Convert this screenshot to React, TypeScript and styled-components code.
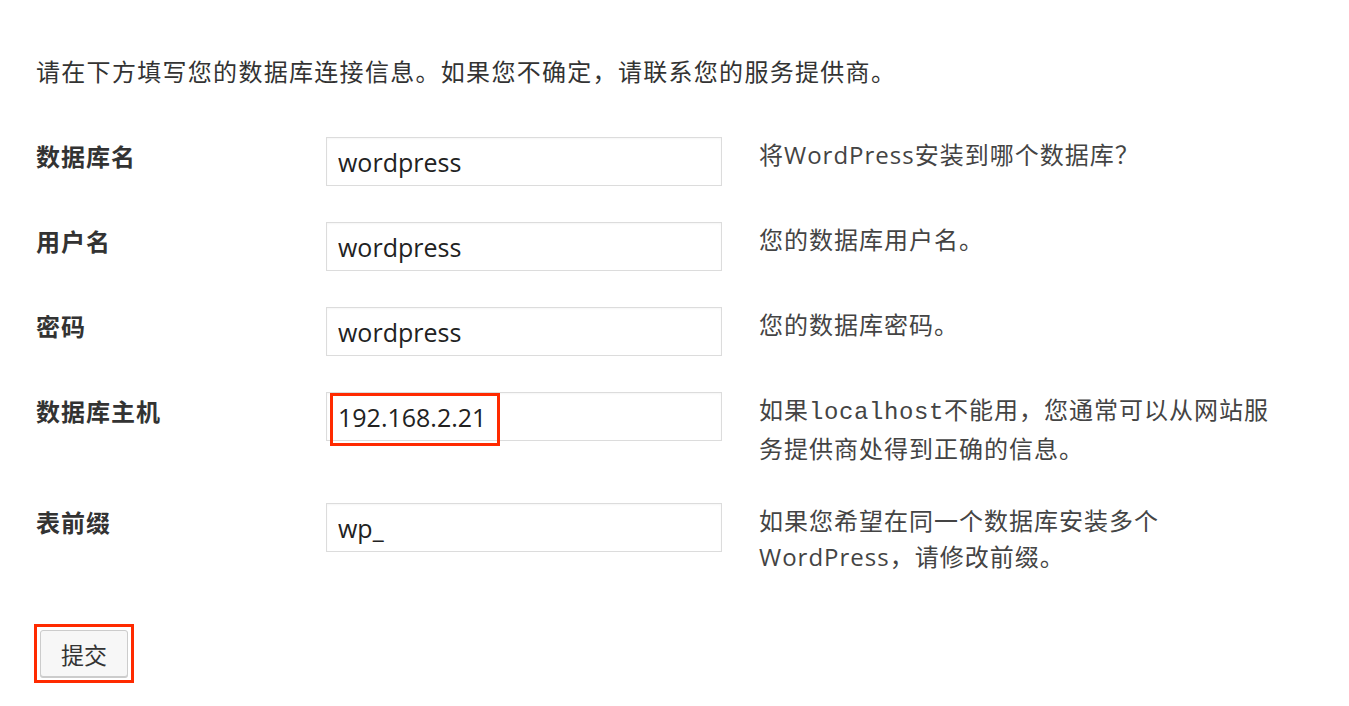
import React from 'react';

import styled, { createGlobalStyle } from 'styled-components';

const GlobalStyle = createGlobalStyle`
  html, body {
    margin: 0;
    padding: 0;
    background: #ffffff;
  }

  body {
    font-family: 'Open Sans', 'Noto Sans CJK SC', sans-serif;
    color: #333;
  }
`;

const Page = styled.div`
  width: 1349px;
  height: 706px;
  box-sizing: border-box;
  padding: 54px 0 0 36px;
  background: #fff;
  overflow: hidden;
`;

const Intro = styled.p`
  margin: 0 0 47px;
  font-size: 24px;
  letter-spacing: 1.3px;
  line-height: 36px;
  color: #333;
`;

const Rows = styled.div`
  display: flex;
  flex-direction: column;
  gap: 36px;
`;

const Row = styled.div`
  display: grid;
  grid-template-columns: 290px 396px 1fr;
  align-items: start;
`;

const Label = styled.label`
  font-family: 'Noto Sans CJK SC', sans-serif;
  font-size: 24px;
  letter-spacing: 1px;
  font-weight: bold;
  line-height: 36px;
  color: #333;
  margin-top: 1px;
`;

const Field = styled.div`
  position: relative;
`;

const Input = styled.input`
  display: block;
  box-sizing: border-box;
  width: 396px;
  height: 49px;
  padding: 0 11px;
  border: 1px solid #dcdcdc;
  background: #fff;
  font-family: 'Open Sans', 'Noto Sans CJK SC', sans-serif;
  font-size: 25px;
  color: #222;
  outline: none;
  box-shadow: inset 0 1px 2px rgba(0, 0, 0, 0.04);
`;

const Highlight = styled.span`
  position: absolute;
  left: 4px;
  top: 1px;
  width: 170px;
  height: 53px;
  box-sizing: border-box;
  border: 3px solid #ff2a00;
  pointer-events: none;
`;

const Help = styled.p`
  margin: 0 0 0 37px;
  font-size: 24px;
  letter-spacing: 1px;
  line-height: 36px;
  color: #444;
`;

const Code = styled.code`
  font-family: 'Liberation Mono', 'DejaVu Sans Mono', monospace;
  font-size: 24px;
  letter-spacing: 0.6px;
`;

const Actions = styled.div`
  margin-top: 49px;
  margin-left: -2px;
`;

const Marked = styled.span`
  display: inline-block;
  padding: 3px;
  border: 3px solid #ff2a00;
`;

const Button = styled.button`
  display: block;
  width: 88px;
  height: 47px;
  padding: 0;
  font-family: 'Noto Sans CJK SC', sans-serif;
  font-size: 23px;
  color: #333;
  background: #f7f7f7;
  border: 1px solid #cccccc;
  border-radius: 3px;
  box-shadow: 0 1px 0 #cccccc;
  cursor: pointer;
`;

type FieldRow = {
  id: string;
  label: string;
  value: string;
  help: React.ReactNode;
  marked?: boolean;
};

const rows: FieldRow[] = [
  { id: 'dbname', label: '数据库名', value: 'wordpress', help: '将WordPress安装到哪个数据库？' },
  { id: 'uname', label: '用户名', value: 'wordpress', help: '您的数据库用户名。' },
  { id: 'pwd', label: '密码', value: 'wordpress', help: '您的数据库密码。' },
  {
    id: 'dbhost',
    label: '数据库主机',
    value: '192.168.2.21',
    marked: true,
    help: (
      <>
        如果<Code>localhost</Code>不能用，您通常可以从网站服
        <br />
        务提供商处得到正确的信息。
      </>
    ),
  },
  {
    id: 'prefix',
    label: '表前缀',
    value: 'wp_',
    help: (
      <>
        如果您希望在同一个数据库安装多个
        <br />
        WordPress，请修改前缀。
      </>
    ),
  },
];

const App = () => {
  return (
    <Page>
      <GlobalStyle />
      <Intro>请在下方填写您的数据库连接信息。如果您不确定，请联系您的服务提供商。</Intro>
      <form onSubmit={(e) => e.preventDefault()}>
        <Rows>
          {rows.map((row) => (
            <Row key={row.id}>
              <Label htmlFor={row.id}>{row.label}</Label>
              <Field>
                <Input id={row.id} type='text' defaultValue={row.value} />
                {row.marked && <Highlight />}
              </Field>
              <Help>{row.help}</Help>
            </Row>
          ))}
        </Rows>
        <Actions>
          <Marked>
            <Button type='submit'>提交</Button>
          </Marked>
        </Actions>
      </form>
    </Page>
  );
};

export default App;
